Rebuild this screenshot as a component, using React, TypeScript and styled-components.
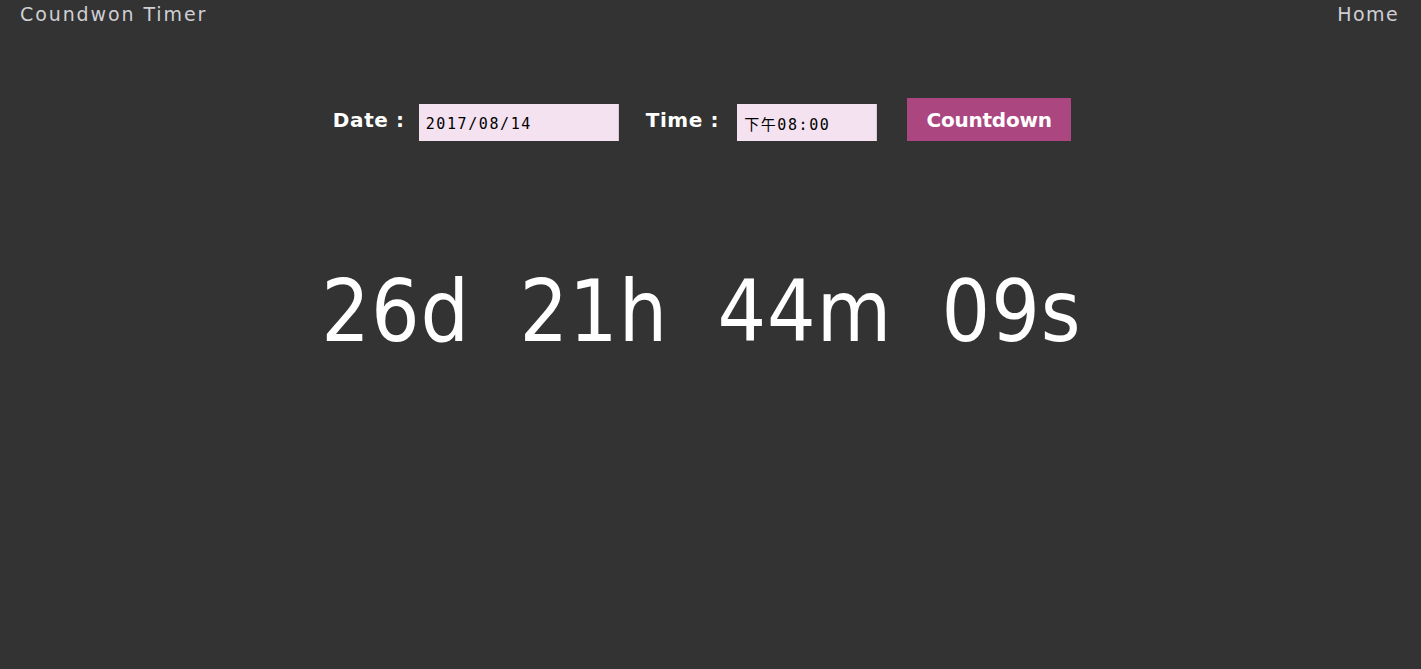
import React from "react";
import styled, { createGlobalStyle } from "styled-components";

const Global = createGlobalStyle`
  html, body { margin: 0; padding: 0; background: #333333; }
  body { font-family: "DejaVu Sans", "Noto Sans CJK SC", sans-serif; }
`;

const Page = styled.div`
  min-height: 669px;
  background: #333333;
  display: flex;
  flex-direction: column;
`;

const Header = styled.header`
  display: flex;
  justify-content: space-between;
  align-items: center;
  padding: 0 22px 0 20px;
  height: 28px;
`;

const Brand = styled.div`
  color: #cfcfd4;
  font-size: 19px;
  letter-spacing: 1.9px;
`;

const NavLink = styled.a`
  color: #cfcfd4;
  font-size: 19px;
  letter-spacing: 1.4px;
  text-decoration: none;
`;

const Form = styled.form`
  display: flex;
  justify-content: center;
  align-items: center;
  margin-top: 70px;
  padding-right: 17px;
`;

const Label = styled.label<{ $gap: number }>`
  color: #ffffff;
  font-size: 20px;
  font-weight: bold;
  letter-spacing: 0.6px;
  margin-right: ${(p) => p.$gap}px;
`;

const Field = styled.input<{ $w: number; $gap: number }>`
  width: ${(p) => p.$w}px;
  height: 37px;
  box-sizing: border-box;
  border: none;
  border-right: 1px solid #d9c8d6;
  background: #f4e2f1;
  color: #000;
  font-family: "DejaVu Sans Mono", "Noto Sans CJK SC", monospace;
  font-size: 15px;
  letter-spacing: 1.6px;
  padding: 2px 7px 0;
  margin-top: 6px;
  margin-right: ${(p) => p.$gap}px;
  outline: none;
`;

const Button = styled.button`
  width: 164px;
  height: 43px;
  border: none;
  background: #ab4680;
  color: #ffffff;
  font-family: "DejaVu Sans", sans-serif;
  font-size: 20px;
  font-weight: bold;
  letter-spacing: -0.2px;
  cursor: pointer;
  padding: 0;
`;

const Display = styled.div`
  color: #ffffff;
  font-family: "DejaVu Sans Condensed", "DejaVu Sans", sans-serif;
  font-stretch: condensed;
  font-size: 85px;
  text-align: center;
  margin-top: 121px;
  letter-spacing: 1px;
  word-spacing: 24px;
  padding-right: 18px;
`;

export default function App() {
  return (
    <Page>
      <Global />
      <Header>
        <Brand>Coundwon Timer</Brand>
        <NavLink href="#">Home</NavLink>
      </Header>
      <Form onSubmit={(e) => e.preventDefault()}>
        <Label $gap={14}>Date :</Label>
        <Field $w={200} $gap={27} type="text" defaultValue="2017/08/14" />
        <Label $gap={18}>Time :</Label>
        <Field $w={140} $gap={30} type="text" defaultValue="下午08:00" />
        <Button type="submit">Countdown</Button>
      </Form>
      <Display>26d 21h 44m 09s</Display>
    </Page>
  );
}
